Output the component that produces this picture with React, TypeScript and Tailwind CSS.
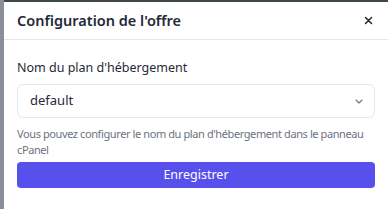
import React from 'react';

const App = () => {
  return (
    <div className="flex h-[209px] w-[388px] bg-[#8b9098]" style={{ fontFamily: '"Noto Sans", "Open Sans", sans-serif' }}>
      <div className="w-[4px] shrink-0" />
      <div className="flex flex-1 flex-col">
        <div className="h-[2px] bg-[#3f4848]" />
        <div className="flex flex-1 flex-col bg-white">
          {/* En-tête */}
          <div className="flex h-[38px] items-center justify-between border-b border-[#e5e7eb] pl-[13px] pr-[15px]">
            <h2 className="text-[14.5px] font-semibold text-[#1f2937]">Configuration de l'offre</h2>
            <button className="text-[#1f2937]">
              <svg width="9" height="9" viewBox="0 0 9 9" fill="none" stroke="currentColor" strokeWidth="1.5" strokeLinecap="round">
                <path d="M1.5 1.5l6 6M7.5 1.5l-6 6" />
              </svg>
            </button>
          </div>

          {/* Contenu */}
          <div className="flex flex-col px-[13px] pt-[19px]">
            <label className="text-[12.5px] leading-[18px] text-[#1f2937]">Nom du plan d'hébergement</label>
            <div className="mt-[7px] flex h-[34px] items-center justify-between rounded-[6px] border border-[#e5e7eb] pl-[12px] pr-[11px]">
              <span className="text-[13px] text-[#1f2937]">default</span>
              <svg width="8" height="5" viewBox="0 0 8 5" fill="none" stroke="#6b7280" strokeWidth="1.1" strokeLinecap="round" strokeLinejoin="round">
                <path d="M1 1l3 3 3-3" />
              </svg>
            </div>
            <p className="mt-[8px] text-[11px] leading-[16px] tracking-[-0.4px] text-[#6b7280]">
              Vous pouvez configurer le nom du plan d'hébergement dans le panneau cPanel
            </p>
            <button className="mt-[4px] h-[26px] w-full rounded-[4px] bg-[#5850ec] text-[12.5px] text-white">
              Enregistrer
            </button>
          </div>
        </div>
      </div>
    </div>
  );
};

export default App;
